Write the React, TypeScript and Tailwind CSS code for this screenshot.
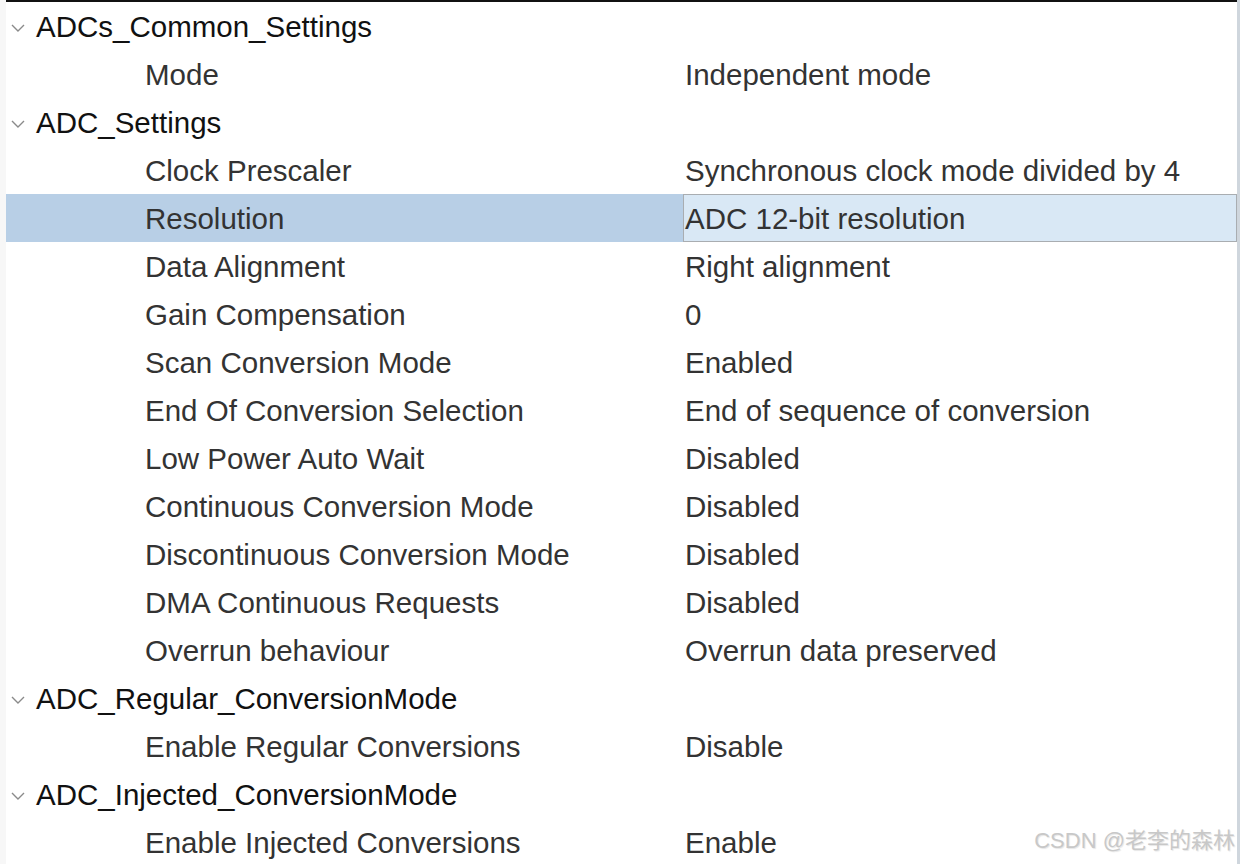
const groups: { title: string; rows: [string, string][] }[] = [
  { title: "ADCs_Common_Settings", rows: [["Mode", "Independent mode"]] },
  {
    title: "ADC_Settings",
    rows: [
      ["Clock Prescaler", "Synchronous clock mode divided by 4"],
      ["Resolution", "ADC 12-bit resolution"],
      ["Data Alignment", "Right alignment"],
      ["Gain Compensation", "0"],
      ["Scan Conversion Mode", "Enabled"],
      ["End Of Conversion Selection", "End of sequence of conversion"],
      ["Low Power Auto Wait", "Disabled"],
      ["Continuous Conversion Mode", "Disabled"],
      ["Discontinuous Conversion Mode", "Disabled"],
      ["DMA Continuous Requests", "Disabled"],
      ["Overrun behaviour", "Overrun data preserved"],
    ],
  },
  {
    title: "ADC_Regular_ConversionMode",
    rows: [["Enable Regular Conversions", "Disable"]],
  },
  {
    title: "ADC_Injected_ConversionMode",
    rows: [["Enable Injected Conversions", "Enable"]],
  },
];

function Chevron() {
  return (
    <svg width="16" height="10" viewBox="0 0 16 10" className="shrink-0">
      <path d="M2 2 L8 8 L14 2" fill="none" stroke="#8a8a8a" strokeWidth="1.4" />
    </svg>
  );
}

export default function App() {
  return (
    <div
      className="relative w-[1241px] h-[864px] overflow-hidden bg-white text-[29.5px]"
      style={{ fontFamily: '"Liberation Sans", Arial, sans-serif' }}
    >
      <div className="flex h-full">
        <div className="w-[6px] bg-[#f7f7f7]" />
        <div className="flex-1 border-t-2 border-[#111] flex flex-col">
          {groups.map((g) => (
            <div key={g.title} className="flex flex-col">
              <div className="h-[48px] flex items-center gap-[10px] pl-[4px] pt-[3px] text-[#111]">
                <Chevron />
                <span>{g.title}</span>
              </div>
              {g.rows.map(([k, v]) => {
                const sel = k === "Resolution";
                return (
                  <div key={k} className="h-[48px] flex text-[#333]">
                    <div
                      className={`w-[677px] flex items-center pl-[139px] pt-[3px] ${sel ? "bg-[#b8cfe6]" : ""}`}
                    >
                      {k}
                    </div>
                    <div
                      className={`flex-1 flex items-center pt-[3px] ${sel ? "bg-[#d9e8f5] border border-[#a9adb1] pl-[1px]" : "pl-[2px]"}`}
                    >
                      {v}
                    </div>
                  </div>
                );
              })}
            </div>
          ))}
        </div>
        <div className="w-[3px] bg-[#cfd6dd]" />
        <div className="w-[1px] bg-white" />
      </div>
      <div
        className="absolute right-[6px] bottom-[7px] text-[22px] text-[#c8c8c8]"
        style={{ fontFamily: '"Liberation Sans", "Noto Sans CJK SC", sans-serif', textShadow: "1px 1px 1px #e6e6e6" }}
      >
        CSDN @老李的森林
      </div>
    </div>
  );
}
